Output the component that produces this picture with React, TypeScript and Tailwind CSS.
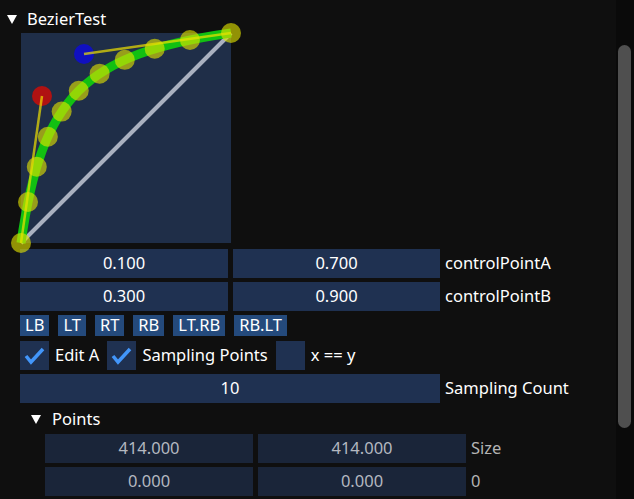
import React from "react";

const SIZE = 210;
const ctrlA = { x: 0.1, y: 0.7 };
const ctrlB = { x: 0.3, y: 0.9 };
const samplingCount = 10;

function bez(t: number, p0: number, p1: number, p2: number, p3: number) {
  const u = 1 - t;
  return u * u * u * p0 + 3 * u * u * t * p1 + 3 * u * t * t * p2 + t * t * t * p3;
}

// normalized (0..1, y up) -> canvas px
const px = (x: number) => x * SIZE;
const py = (y: number) => SIZE - y * SIZE;

function Triangle() {
  return (
    <svg width="10" height="9" viewBox="0 0 10 9" className="shrink-0">
      <polygon points="0,0 10,0 5,9" fill="#ffffff" />
    </svg>
  );
}

function BezierCanvas() {
  const a = { x: px(ctrlA.x), y: py(ctrlA.y) };
  const b = { x: px(ctrlB.x), y: py(ctrlB.y) };
  const p0 = { x: 0, y: SIZE };
  const p3 = { x: SIZE, y: 0 };
  const d = `M ${p0.x} ${p0.y} C ${a.x} ${a.y} ${b.x} ${b.y} ${p3.x} ${p3.y}`;
  const samples = Array.from({ length: samplingCount + 1 }, (_, i) => {
    const t = i / samplingCount;
    return { x: bez(t, p0.x, a.x, b.x, p3.x), y: bez(t, p0.y, a.y, b.y, p3.y) };
  });

  return (
    <div className="relative w-[210px] h-[210px] bg-[#1f2e48] ml-[21px]">
      <svg width={SIZE} height={SIZE} className="absolute left-0 top-0 overflow-visible">
        <line x1={p0.x} y1={p0.y} x2={p3.x} y2={p3.y} stroke="#aab1c0" strokeWidth="4" />
        <path d={d} fill="none" stroke="#12c012" strokeWidth="9" />
        <circle cx={a.x} cy={a.y} r="10" fill="#b01212" />
        <circle cx={b.x} cy={b.y} r="10" fill="#1010c0" />
        <line x1={p0.x} y1={p0.y} x2={a.x} y2={a.y} stroke="rgba(240,225,0,0.7)" strokeWidth="2.5" />
        <line x1={p3.x} y1={p3.y} x2={b.x} y2={b.y} stroke="rgba(240,225,0,0.7)" strokeWidth="2.5" />
        {samples.map((s, i) => (
          <circle key={i} cx={s.x} cy={s.y} r="10" fill="rgba(228,228,0,0.62)" />
        ))}
      </svg>
    </div>
  );
}

function Field({ value, dim, className }: { value: string; dim?: boolean; className?: string }) {
  return (
    <div
      className={
        "h-[29px] flex items-center justify-center " +
        (dim ? "bg-[#1a2539] text-[#b4b8c0] " : "bg-[#1f3151] text-white ") +
        (className ?? "")
      }
    >
      {value}
    </div>
  );
}

function Btn({ label }: { label: string }) {
  return <div className="h-[21px] px-[5px] flex items-center bg-[#244a7c] text-white">{label}</div>;
}

function Check({ label, checked }: { label: string; checked?: boolean }) {
  return (
    <div className="flex items-center">
      <div className="w-[29px] h-[29px] bg-[#1f3151] flex items-center justify-center">
        {checked && (
          <svg width="29" height="29" viewBox="0 0 29 29">
            <polyline points="6,15 11,21 23,8" fill="none" stroke="#4296fa" strokeWidth="3.5" />
          </svg>
        )}
      </div>
      <span className="ml-[6px]">{label}</span>
    </div>
  );
}

export default function App() {
  return (
    <div
      className="w-[634px] h-[499px] overflow-hidden flex bg-[#0f0f0f] text-white text-[16.5px] leading-none"
      style={{ fontFamily: '"Noto Sans", "Open Sans", sans-serif' }}
    >
      <div className="flex-1 pt-[7px]">
        {/* BezierTest header */}
        <div className="h-[24px] flex items-center gap-[10px] pl-[7px]">
          <Triangle />
          <span>BezierTest</span>
        </div>

        <div className="mt-[2px]">
          <BezierCanvas />
        </div>

        <div className="flex flex-col gap-[4px] mt-[6px] pl-[20px]">
          <div className="flex items-center">
            <Field value="0.100" className="w-[208px]" />
            <Field value="0.700" className="w-[207px] ml-[5px]" />
            <span className="ml-[5px]">controlPointA</span>
          </div>
          <div className="flex items-center">
            <Field value="0.300" className="w-[208px]" />
            <Field value="0.900" className="w-[207px] ml-[5px]" />
            <span className="ml-[5px]">controlPointB</span>
          </div>
          <div className="flex items-center gap-[9px]">
            {["LB", "LT", "RT", "RB", "LT.RB", "RB.LT"].map((l) => (
              <Btn key={l} label={l} />
            ))}
          </div>
          <div className="flex items-center gap-[8px] mt-[1px]">
            <Check label="Edit A" checked />
            <Check label="Sampling Points" checked />
            <Check label="x == y" />
          </div>
          <div className="flex items-center">
            <Field value="10" className="w-[420px]" />
            <span className="ml-[5px]">Sampling Count</span>
          </div>
        </div>

        {/* Points header */}
        <div className="h-[29px] pt-[3px] flex items-center gap-[11px] pl-[31px]">
          <Triangle />
          <span>Points</span>
        </div>

        <div className="flex flex-col gap-[4px] mt-[2px] pl-[45px]">
          {[
            ["414.000", "414.000", "Size"],
            ["0.000", "0.000", "0"],
            ["", "", ""],
          ].map(([x, y, l], i) => (
            <div key={i} className="flex items-center">
              <Field value={x} dim className="w-[208px]" />
              <Field value={y} dim className="w-[208px] ml-[5px]" />
              <span className="ml-[5px] text-[#b4b4b4]">{l}</span>
            </div>
          ))}
        </div>
      </div>

      {/* scrollbar */}
      <div className="w-[18px] h-full bg-[#0a0a0a] pt-[45px] pl-[2px]">
        <div className="w-[13px] h-[383px] rounded-full bg-[#4f4f4f]" />
      </div>
    </div>
  );
}
